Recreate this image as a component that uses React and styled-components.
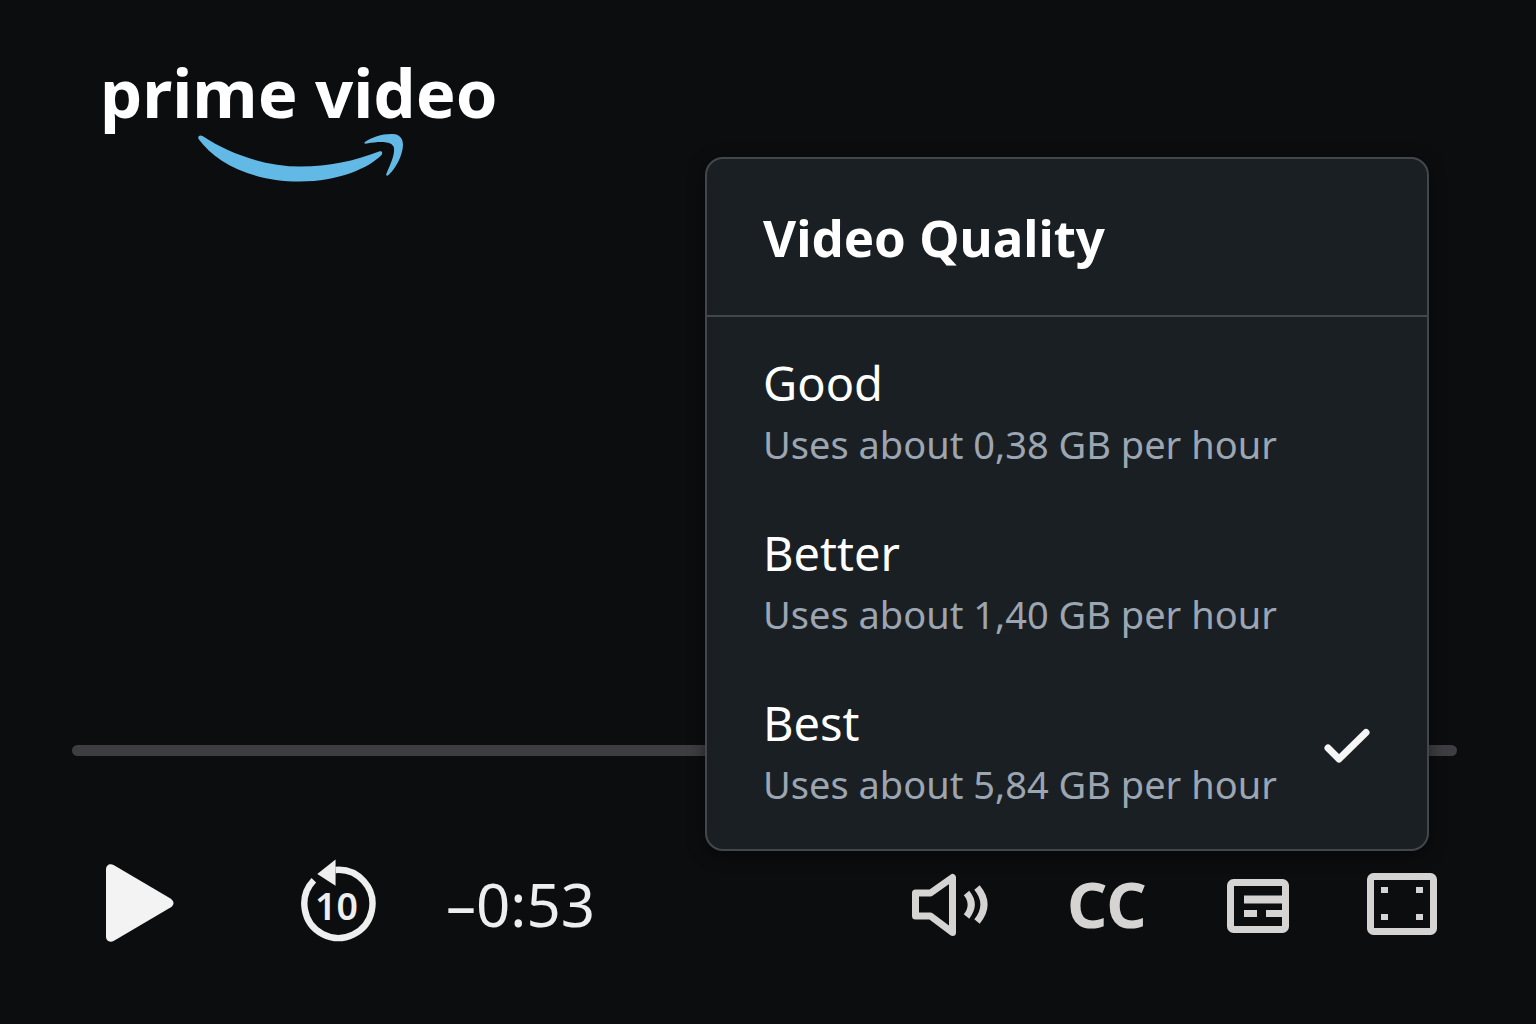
import React, { useState } from "react";
import styled, { createGlobalStyle } from "styled-components";

const GlobalStyle = createGlobalStyle`
  *, *::before, *::after { box-sizing: border-box; }
  body {
    margin: 0;
    background: #0b0d0f;
    color: #ffffff;
    font-family: "Noto Sans", "Open Sans", sans-serif;
  }
  button, input { font: inherit; color: inherit; margin: 0; }
`;

const Player = styled.main`
  position: relative;
  display: flex;
  flex-direction: column;
  justify-content: space-between;
  min-height: 100vh;
  padding: 51px 79px 70px 72px;
`;

const Brand = styled.a`
  align-self: flex-start;
  display: flex;
  flex-direction: column;
  margin-left: 28px;
  color: #ffffff;
  text-decoration: none;
`;

const BrandName = styled.span`
  font-size: 67px;
  font-weight: 700;
  line-height: 82px;
  white-space: nowrap;
`;

const Smile = styled.svg`
  display: block;
  margin-left: 96px;
`;

const Footer = styled.footer`
  display: flex;
  flex-direction: column;
  gap: 98px;
`;

const SeekBar = styled.input`
  appearance: none;
  display: block;
  width: 100%;
  height: 11px;
  border-radius: 6px;
  background: #3e3d42;
  cursor: pointer;

  &::-webkit-slider-thumb {
    appearance: none;
    width: 0;
    height: 0;
  }
`;

const Controls = styled.div`
  display: flex;
  align-items: center;
  justify-content: space-between;
  padding: 0 20px 0 34px;
`;

const ControlGroup = styled.div`
  display: flex;
  align-items: center;
  gap: ${(p) => p.$gap}px;
`;

const ControlButton = styled.button`
  display: flex;
  align-items: center;
  justify-content: ${(p) => p.$align || "flex-start"};
  width: ${(p) => p.$width}px;
  height: 100px;
  padding: 0;
  border: 0;
  background: none;
  color: ${(p) => p.$color || "#d6d4d3"};
  cursor: pointer;
`;

const Captions = styled.span`
  font-size: 63px;
  font-weight: 700;
  line-height: 72px;
`;

const TimeLeft = styled.time`
  color: #eeeeee;
  font-size: 60px;
  line-height: 72px;
  white-space: nowrap;
`;

const Menu = styled.section`
  position: absolute;
  right: 107px;
  bottom: 173px;
  width: 724px;
  border: 2px solid #43474c;
  border-radius: 18px;
  background: #1a1f24;
  box-shadow: 0 4px 16px rgba(0, 0, 0, 0.5);
`;

const MenuHeader = styled.header`
  padding: 42px 56px;
  border-bottom: 2px solid #43474c;
`;

const MenuTitle = styled.h2`
  margin: 0;
  font-size: 51px;
  font-weight: 700;
  line-height: 72px;
`;

const OptionList = styled.div`
  padding: 11px 0;
`;

const Option = styled.label`
  display: flex;
  align-items: center;
  justify-content: space-between;
  padding: 24px 56px;
  cursor: pointer;
`;

const OptionRadio = styled.input`
  appearance: none;
  position: absolute;
  width: 0;
  height: 0;
`;

const OptionText = styled.span`
  display: flex;
  flex-direction: column;
  white-space: nowrap;
`;

const OptionName = styled.span`
  font-size: 47px;
  line-height: 62px;
`;

const OptionUsage = styled.span`
  color: #9ca6b2;
  font-size: 38px;
  line-height: 60px;
`;

const qualities = [
  { name: "Good", usage: "0,38" },
  { name: "Better", usage: "1,40" },
  { name: "Best", usage: "5,84" },
];

const PlayIcon = () => (
  <svg width="68" height="80" viewBox="0 0 68 80" aria-hidden="true">
    <path d="M0 5.500C0 1 4 -1 8 1.200L64.500 34.500C68.500 37.500 68.500 40.500 64.500 43.500L8 76.800C4 79 0 77 0 72.500Z" fill="currentColor" />
  </svg>
);

const RewindIcon = () => (
  <svg width="76" height="90" viewBox="0 0 76 90" aria-hidden="true">
    <path d="M35 10.500A34.500 34.500 0 1 1 13 21" fill="none" stroke="currentColor" strokeWidth="6.500" />
    <path d="M16.500 14.500L35 0V26.500Z" fill="currentColor" />
    <text x="36" y="61" textAnchor="middle" fill="currentColor" fontFamily="Noto Sans, sans-serif" fontWeight="600" fontSize="38">10</text>
  </svg>
);

const VolumeIcon = () => (
  <svg width="78" height="66" viewBox="0 -2 78 66" fill="none" stroke="currentColor" aria-hidden="true">
    <path d="M4.500 20H19.500L41.500 4.500V59.500L19.500 43H4.500Z" strokeWidth="7" strokeLinejoin="round" />
    <path d="M55.500 20Q65 31.500 55.500 43.500M66 14.500Q80 31.500 66 48.500" strokeWidth="7" />
  </svg>
);

const SubtitlesIcon = () => (
  <svg width="62" height="58" viewBox="0 -4 62 58" fill="none" stroke="currentColor" aria-hidden="true">
    <rect x="3.500" y="3.500" width="55" height="47" rx="3" strokeWidth="7" />
    <path d="M17 20.500H56" strokeWidth="8" />
    <path d="M17 34.500H30M39 34.500H56" strokeWidth="7" />
  </svg>
);

const FullscreenIcon = () => (
  <svg width="70" height="62" viewBox="0 0 70 62" aria-hidden="true">
    <rect x="3.500" y="3.500" width="63" height="55" rx="3" fill="none" stroke="currentColor" strokeWidth="7" />
    <path d="M14 14h7v6h-7zM49 14h7v6h-7zM14 41h7v6h-7zM49 41h7v6h-7z" fill="currentColor" />
  </svg>
);

const CheckIcon = () => (
  <svg width="48" height="50" viewBox="0 0 48 50" aria-hidden="true">
    <path d="M5 20L16 31L43 4.500" fill="none" stroke="#f5f5f5" strokeWidth="7" strokeLinecap="round" strokeLinejoin="round" />
  </svg>
);

export default function App() {
  const [quality, setQuality] = useState("Best");

  return (
    <Player>
      <GlobalStyle />
      <Brand href="#home">
        <BrandName>prime video</BrandName>
        <Smile width="208" height="50" viewBox="0 0 208 50" fill="#63b9e6" aria-hidden="true">
          <path d="M6.500 3C4 1.500 1.500 3 2.500 6C20 30 56 48.500 104 48.500C142 48.500 173 35 185.500 22C187 19.500 186 17.500 183 18.500C159 28 132 33.500 105 33.500C69 33.500 34 21 6.500 3Z" />
          <path d="M169 9C176 4 187 0.500 197 1C203 1.200 207 5 207 12C206.500 23 200 35 192.500 42C191 43.500 189.500 42.500 190.500 40.500C194 32 199 22 198 15C197 9 187 7.500 171 10.500C168.500 11 167.500 10 169 9Z" />
        </Smile>
      </Brand>

      <Footer>
        <SeekBar type="range" min="0" max="100" defaultValue="0" aria-label="Seek" />
        <Controls>
          <ControlGroup $gap={70}>
            <ControlButton type="button" $width={125} $color="#f3f3f3" aria-label="Play">
              <PlayIcon />
            </ControlButton>
            <ControlButton type="button" $width={75} $color="#eeeeee" aria-label="Rewind 10 seconds">
              <RewindIcon />
            </ControlButton>
            <TimeLeft>–0:53</TimeLeft>
          </ControlGroup>
          <ControlGroup $gap={74}>
            <ControlButton type="button" $width={82} aria-label="Volume">
              <VolumeIcon />
            </ControlButton>
            <ControlButton type="button" $width={82} aria-label="Closed captions">
              <Captions>CC</Captions>
            </ControlButton>
            <ControlButton type="button" $width={70} $align="center" aria-label="Subtitles">
              <SubtitlesIcon />
            </ControlButton>
            <ControlButton type="button" $width={70} aria-label="Full screen">
              <FullscreenIcon />
            </ControlButton>
          </ControlGroup>
        </Controls>
      </Footer>

      <Menu aria-labelledby="quality-title">
        <MenuHeader>
          <MenuTitle id="quality-title">Video Quality</MenuTitle>
        </MenuHeader>
        <OptionList role="radiogroup" aria-labelledby="quality-title">
          {qualities.map(({ name, usage }) => (
            <Option key={name} htmlFor={`quality-${name}`}>
              <OptionRadio
                type="radio"
                name="quality"
                id={`quality-${name}`}
                checked={quality === name}
                onChange={() => setQuality(name)}
              />
              <OptionText>
                <OptionName>{name}</OptionName>
                <OptionUsage>Uses about {usage} GB per hour</OptionUsage>
              </OptionText>
              {quality === name && <CheckIcon />}
            </Option>
          ))}
        </OptionList>
      </Menu>
    </Player>
  );
}
